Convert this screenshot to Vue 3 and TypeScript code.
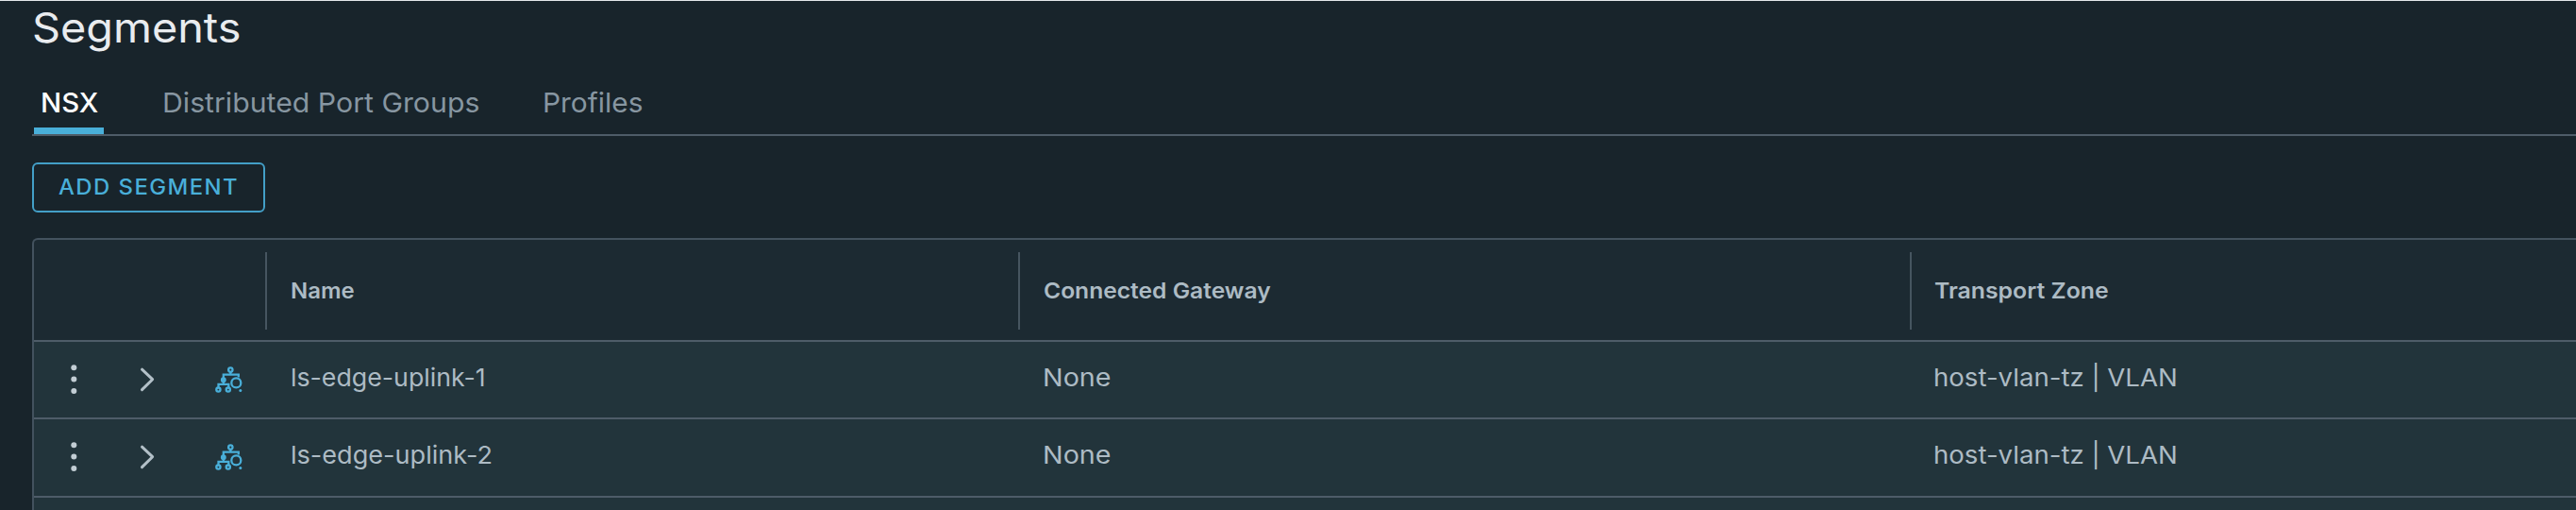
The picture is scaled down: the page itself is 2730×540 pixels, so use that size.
<script setup lang="ts">
interface Tab { label: string; cls: string }
interface Segment { name: string; gateway: string; zone: string; cls: string }

const tabs: Tab[] = [
  { label: 'NSX', cls: 'nsx active' },
  { label: 'Distributed Port Groups', cls: 'groups' },
  { label: 'Profiles', cls: 'profiles' },
]
const segments: Segment[] = [
  { name: 'ls-edge-uplink-1', gateway: 'None', zone: 'host-vlan-tz | VLAN', cls: 'first' },
  { name: 'ls-edge-uplink-2', gateway: 'None', zone: 'host-vlan-tz | VLAN', cls: 'second' },
]
</script>

<template>
  <main class="page">
    <h1 class="title"><span class="wide">Segments</span></h1>
    <nav class="tabs">
      <a v-for="t in tabs" :key="t.label" class="tab" :class="t.cls"><span class="wide">{{ t.label }}</span></a>
    </nav>
    <button class="add" type="button"><span class="wide">ADD SEGMENT</span></button>
    <section class="grid">
      <div class="row head">
        <div class="cell"></div>
        <div class="cell sep h-name"><span class="wide">Name</span></div>
        <div class="cell sep h-gateway"><span class="wide">Connected Gateway</span></div>
        <div class="cell sep h-zone"><span class="wide">Transport Zone</span></div>
      </div>
      <div v-for="s in segments" :key="s.name" class="row body" :class="s.cls">
        <div class="cell actions">
          <svg width="246" height="80" viewBox="0 0 246 80">
            <g fill="#c2cdd4">
              <circle cx="42.3" cy="27.3" r="3" />
              <circle cx="42.3" cy="39.6" r="3" />
              <circle cx="42.3" cy="52" r="3" />
            </g>
            <path d="M114.5 29.2 L125.6 39.7 L114.5 50.6" fill="none" stroke="#b3c0c8" stroke-width="3" stroke-linecap="round" stroke-linejoin="round" />
            <g fill="none" stroke="#49afd9" stroke-width="2.3">
              <circle cx="208.3" cy="29.6" r="2.2" />
              <path d="M208.3 32V35M200.8 38V34.6H216.8V37.5M200.8 41V45M195.5 49V44.8H206.3V49" />
              <circle cx="200.8" cy="40.2" r="1.8" fill="#49afd9" />
              <circle cx="195.4" cy="50.6" r="2.1" />
              <circle cx="205.8" cy="50.6" r="2.1" />
              <circle cx="214.3" cy="43.4" r="5" />
            </g>
            <circle cx="218.8" cy="51.5" r="1.5" fill="#49afd9" />
          </svg>
        </div>
        <div class="cell c-name"><span class="wide">{{ s.name }}</span></div>
        <div class="cell c-gateway"><span class="wide">{{ s.gateway }}</span></div>
        <div class="cell c-zone"><span class="wide">{{ s.zone }}</span></div>
      </div>
      <div class="row rest"></div>
    </section>
  </main>
</template>

<style>
body { margin: 0; background: #18242b; overflow: hidden; }
</style>

<style scoped>
.page {
  box-sizing: border-box;
  height: 540px;
  padding-left: 34px;
  border-top: 1px solid #e4e8ea;
  overflow: hidden;
  background: #18242b;
  color: #adbbc4;
  font-family: Inter, "Liberation Sans", sans-serif;
}
.wide {
  display: inline-block;
  transform-origin: left center;
  white-space: nowrap;
}
.title {
  margin: 0;
  height: 55px;
  font-size: 44px;
  font-weight: 400;
  line-height: 56px;
  color: #e9ecef;
}
.title .wide { transform: scaleX(1.063); }
.tabs {
  display: flex;
  height: 86px;
  border-bottom: 2px solid #4e5c68;
}
.tab {
  box-sizing: border-box;
  height: 86px;
  padding-top: 38px;
  font-size: 29px;
  line-height: 30px;
  white-space: nowrap;
  color: #8796a1;
}
.nsx { width: 74px; margin-left: 2px; padding-left: 7px; }
.nsx .wide { transform: scaleX(1.01); }
.groups { margin-left: 62px; width: 403px; }
.groups .wide { transform: scaleX(1.043); }
.profiles .wide { transform: scaleX(1.03); }
.active { font-weight: 500; color: #fff; border-bottom: 7px solid #49afd9; }
.add {
  display: block;
  box-sizing: border-box;
  width: 247px;
  height: 53px;
  margin: 28px 0 27px;
  padding: 0 0 0 26px;
  border: 2px solid #439fc7;
  border-radius: 6px;
  background: transparent;
  color: #49afd9;
  font: 500 22.5px/48px Inter, sans-serif;
  letter-spacing: 1.38px;
  text-align: left;
}
.add .wide { display: block; height: 49px; transform: scaleX(1.06); }
.grid {
  border: 2px solid #43525e;
  border-right: 0;
  border-radius: 6px 0 0 0;
  background: #1c2a32;
}
.row {
  display: grid;
  grid-template-columns: 245px 798px 945px 1fr;
  border-bottom: 2px solid #4e5c68;
}
.head { height: 106px; align-items: center; padding-top: 1px; box-sizing: content-box; height: 105px; font-size: 23px; font-weight: 600; }
.head .cell { height: 82px; line-height: 82px; }
.sep { border-left: 2px solid #465560; padding-left: 25px; }
.h-name .wide { transform: scaleX(1.04); }
.h-gateway .wide { transform: scaleX(1.07); }
.h-zone { padding-left: 24px; }
.h-zone .wide { transform: scaleX(1.078); }
.body { height: 80px; font-size: 26px; line-height: 75px; background: #22343b; }
.second { height: 81px; }
.actions svg { display: block; }
.c-name { padding-left: 27px; }
.first .c-name .wide { transform: scaleX(1.028); }
.second .c-name .wide { transform: scaleX(1.042); }
.c-gateway { padding-left: 26px; }
.c-gateway .wide { transform: scaleX(1.104); }
.c-zone { padding-left: 25px; }
.c-zone .wide { transform: scaleX(1.061); }
.rest { height: 30px; background: #22343b; }
</style>
